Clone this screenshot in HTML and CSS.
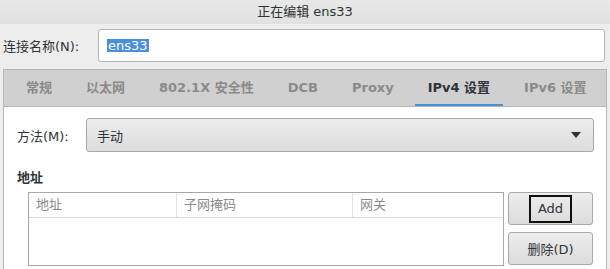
FILE: index.html
```html
<!DOCTYPE html>
<html lang="zh-CN">
<head>
    <meta charset="UTF-8">
    <meta name="viewport" content="width=device-width, initial-scale=1.0">
    <title>正在编辑 ens33</title>
    <link rel="stylesheet" href="styles.css">
</head>
<body>
    <div class="titlebar">正在编辑 ens33</div>

    <div class="name-row">
        <span class="name-label">连接名称(N):</span>
        <div class="name-input"><span class="selected">ens33</span></div>
    </div>

    <div class="notebook">
        <div class="tabs">
            <div class="tab">常规</div>
            <div class="tab">以太网</div>
            <div class="tab">802.1X 安全性</div>
            <div class="tab">DCB</div>
            <div class="tab">Proxy</div>
            <div class="tab active">IPv4 设置</div>
            <div class="tab">IPv6 设置</div>
        </div>

        <div class="page">
            <div class="method-row">
                <span class="method-label">方法(M):</span>
                <div class="combo">
                    <span>手动</span>
                    <span class="arrow"></span>
                </div>
            </div>

            <h4 class="section-title">地址</h4>

            <div class="address-area">
                <div class="address-table">
                    <div class="table-head">
                        <div class="col">地址</div>
                        <div class="col">子网掩码</div>
                        <div class="col">网关</div>
                    </div>
                    <div class="table-body"></div>
                </div>
                <div class="side-buttons">
                    <button class="btn"><span class="focus">Add</span></button>
                    <button class="btn">删除(D)</button>
                </div>
            </div>
        </div>
    </div>
</body>
</html>
```

FILE: styles.css
```css
* {
    margin: 0;
    padding: 0;
    box-sizing: border-box;
}

body {
    width: 610px;
    height: 269px;
    overflow: hidden;
    background-color: #ededed;
    font-family: 'DejaVu Sans', 'Noto Sans CJK SC', sans-serif;
    font-size: 13px;
    color: #2e3436;
}

.titlebar {
    height: 24px;
    line-height: 23px;
    text-align: center;
    color: #2e3436;
    background: linear-gradient(#e8e8e8, #e1e1e1);
}

.name-row {
    display: flex;
    align-items: center;
    padding: 5px 5px 0 3px;
}

.name-label {
    width: 95px;
}

.name-input {
    flex: 1;
    height: 33px;
    background-color: #fff;
    border: 1px solid #b4b4b4;
    border-radius: 3px;
    padding-left: 8px;
    display: flex;
    align-items: center;
}

.selected {
    background-color: #4a90d9;
    color: #fff;
    line-height: 13px;
    padding: 0 1px;
}

.notebook {
    margin: 7px 3px 0 3px;
    border: 1px solid #b6b6b6;
    border-bottom: none;
    background-color: #fff;
}

.tabs {
    display: flex;
    height: 37px;
    padding-left: 9px;
    overflow: hidden;
    background-color: #d0d0d0;
    border-bottom: 1px solid #b6b6b6;
}

.tab {
    flex-shrink: 0;
    white-space: nowrap;
    padding: 0 13px;
    margin-right: 8px;
    line-height: 36px;
    font-weight: bold;
    color: #8a8a8a;
    border-bottom: 3px solid transparent;
    height: 37px;
}

.tab.active {
    color: #2e3436;
    border-bottom-color: #4a90d9;
}

.page {
    padding: 11px 12px 0 13px;
    height: 162px;
}

.method-row {
    display: flex;
    align-items: center;
}

.method-label {
    width: 69px;
}

.combo {
    flex: 1;
    height: 34px;
    display: flex;
    align-items: center;
    justify-content: space-between;
    padding: 0 12px 0 10px;
    border: 1px solid #a8a8a8;
    border-radius: 3px;
    background: linear-gradient(#ededed, #dcdcdc);
}

.arrow {
    width: 0;
    height: 0;
    border-left: 5px solid transparent;
    border-right: 5px solid transparent;
    border-top: 6px solid #2e3436;
}

.section-title {
    font-size: 13px;
    font-weight: bold;
    margin-top: 18px;
    line-height: 16px;
}

.address-area {
    display: flex;
    margin-top: 6px;
    padding-left: 11px;
}

.address-table {
    width: 476px;
    height: 74px;
    border: 1px solid #a8a8a8;
    background-color: #fff;
}

.table-head {
    display: flex;
    height: 25px;
    border-bottom: 1px solid #dadada;
    color: #8a8a8a;
}

.col {
    line-height: 23px;
    padding-left: 7px;
    border-right: 1px solid #e2e2e2;
}

.col:nth-child(1) {
    width: 148px;
}

.col:nth-child(2) {
    width: 176px;
}

.col:nth-child(3) {
    flex: 1;
    border-right: none;
}

.side-buttons {
    display: flex;
    flex-direction: column;
    gap: 7px;
    margin-left: 4px;
}

.btn {
    width: 85px;
    height: 33px;
    font-family: inherit;
    font-size: 13px;
    color: #2e3436;
    border: 1px solid #a8a8a8;
    border-radius: 3px;
    background: linear-gradient(#ededed, #dcdcdc);
    display: flex;
    align-items: center;
    justify-content: center;
}

.focus {
    display: inline-block;
    border: 2px solid #111;
    padding: 0 7px;
    line-height: 24px;
}
```
